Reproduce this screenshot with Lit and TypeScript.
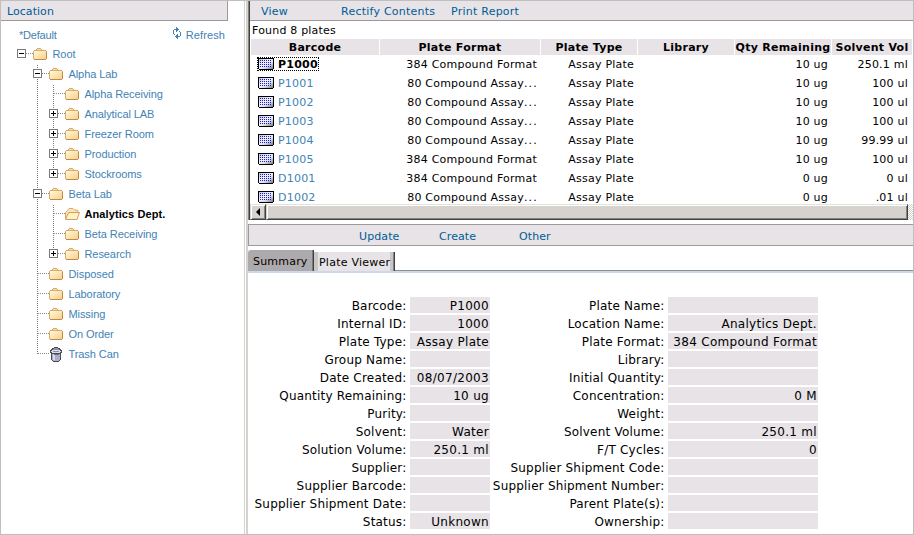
import { LitElement, html, svg, css, nothing } from "lit";
import { customElement, property } from "lit/decorators.js";
import { classMap } from "lit/directives/class-map.js";

interface TreeNode {
  label: string;
  level: number;
  toggle?: "plus" | "minus";
  last?: boolean;
  icon?: "open" | "trash";
  selected?: boolean;
}

const TREE: TreeNode[] = [
  { label: "Root", level: 0, toggle: "minus" },
  { label: "Alpha Lab", level: 1, toggle: "minus" },
  { label: "Alpha Receiving", level: 2 },
  { label: "Analytical LAB", level: 2, toggle: "plus" },
  { label: "Freezer Room", level: 2, toggle: "plus" },
  { label: "Production", level: 2, toggle: "plus" },
  { label: "Stockrooms", level: 2, toggle: "plus", last: true },
  { label: "Beta Lab", level: 1, toggle: "minus" },
  { label: "Analytics Dept.", level: 2, icon: "open", selected: true },
  { label: "Beta Receiving", level: 2 },
  { label: "Research", level: 2, toggle: "plus", last: true },
  { label: "Disposed", level: 1 },
  { label: "Laboratory", level: 1 },
  { label: "Missing", level: 1 },
  { label: "On Order", level: 1 },
  { label: "Trash Can", level: 1, icon: "trash", last: true },
];

const COLUMNS = ["Barcode", "Plate Format", "Plate Type", "Library", "Qty Remaining", "Solvent Vol"];

const PLATES = [
  ["P1000", "384 Compound Format", "Assay Plate", "", "10 ug", "250.1 ml"],
  ["P1001", "80 Compound Assay...", "Assay Plate", "", "10 ug", "100 ul"],
  ["P1002", "80 Compound Assay...", "Assay Plate", "", "10 ug", "100 ul"],
  ["P1003", "80 Compound Assay...", "Assay Plate", "", "10 ug", "100 ul"],
  ["P1004", "80 Compound Assay...", "Assay Plate", "", "10 ug", "99.99 ul"],
  ["P1005", "384 Compound Format", "Assay Plate", "", "10 ug", "100 ul"],
  ["D1001", "384 Compound Format", "Assay Plate", "", "0 ug", "0 ul"],
  ["D1002", "80 Compound Assay...", "Assay Plate", "", "0 ug", ".01 ul"],
];

const SUMMARY = [
  ["Barcode:", "P1000", "Plate Name:", ""],
  ["Internal ID:", "1000", "Location Name:", "Analytics Dept."],
  ["Plate Type:", "Assay Plate", "Plate Format:", "384 Compound Format"],
  ["Group Name:", "", "Library:", ""],
  ["Date Created:", "08/07/2003", "Initial Quantity:", ""],
  ["Quantity Remaining:", "10 ug", "Concentration:", "0 M"],
  ["Purity:", "", "Weight:", ""],
  ["Solvent:", "Water", "Solvent Volume:", "250.1 ml"],
  ["Solution Volume:", "250.1 ml", "F/T Cycles:", "0"],
  ["Supplier:", "", "Supplier Shipment Code:", ""],
  ["Supplier Barcode:", "", "Supplier Shipment Number:", ""],
  ["Supplier Shipment Date:", "", "Parent Plate(s):", ""],
  ["Status:", "Unknown", "Ownership:", ""],
];

const folderIcon = html`<svg width="16" height="20" viewBox="0 0 16 20" shape-rendering="crispEdges">
  <defs><linearGradient id="f" x1="0" y1="0" x2="1" y2="1">
    <stop offset="0" stop-color="#fff8de" /><stop offset="1" stop-color="#f9d183" />
  </linearGradient></defs>
  <path d="M4 4h4v1h1v1h4v1h1v8h-1v1H1v-1H0V7h1V6h2V5h1z" fill="#d9a968" />
  <path d="M4 5h4v1H4z" fill="#f7e2b5" />
  <path d="M1 7h12v8H1z" fill="url(#f)" />
  <path d="M13 8h1v7h-1zM1 15h12v1H1z" fill="#bd8a52" />
</svg>`;

const openFolderIcon = html`<svg width="16" height="20" viewBox="0 0 16 20">
  <path d="M.5 15V8.500L2.500 6.500L4 4.500H8L9.500 6H12.500L13.500 8.500" fill="#fbe5b6" stroke="#d9a968" />
  <path d="M.5 15.500L3.500 8.500H14.500L12 15.500z" fill="#fff0c8" stroke="#d3a05f" />
</svg>`;

const trashIcon = html`<svg width="16" height="20" viewBox="0 0 16 20" shape-rendering="crispEdges">
  <path d="M5 3h4v1h2v1h1v1h1v3h-1v7h-1v1h-1v1H4v-1H3v-1H2V9H1V6h1V5h1V4h2z" fill="#4a4c52" />
  <path d="M3 6h8v1h1v1h-1v1H3V8H2V7h1z" fill="#dcdde8" />
  <path d="M5 4h4v1h1v1H4V5h1zM4 7h6v1H4z" fill="#8d8fa6" />
  <path d="M3 10h8v6h-1v1H4v-1H3z" fill="#adaecb" />
  <path d="M4 10h2v6H4z" fill="#d6d7ea" />
  <path d="M5 10h5v1H5z" fill="#6b6d80" />
</svg>`;

const refreshIcon = html`<svg width="9" height="13" viewBox="0 0 9 13" shape-rendering="crispEdges" fill="#4282b5">
  <path d="M3 0h1v5H3zM4 1h1v3H4zM5 2h1v1H5zM1 2h2v1H1zM0 3h1v4H0zM1 7h1v1H1z" />
  <path d="M6 4h1v1H6zM7 5h1v4H7zM5 9h2v1H5zM4 7h1v5H4zM3 8h1v3H3zM2 9h1v1H2z" />
</svg>`;

const plateIcon = html`<svg width="16" height="12" viewBox="0 0 16 12" shape-rendering="crispEdges">
  <defs>
    <linearGradient id="p" x1="0" y1="0" x2="1" y2="1">
      <stop offset="0" stop-color="#c4c4cc" /><stop offset=".4" stop-color="#f2f2fb" /><stop offset=".65" stop-color="#dedee6" /><stop offset="1" stop-color="#77777c" />
    </linearGradient>
    <pattern id="w" width="2" height="2" patternUnits="userSpaceOnUse"><rect width="1" height="1" fill="#1919d8" /></pattern>
  </defs>
  <path d="M0 0h16v11h-1v1H1v-1H0z" fill="#000" />
  <path d="M1 1h14v10H1z" fill="url(#p)" />
  <path d="M2 2h12v7H2z" fill="url(#w)" />
</svg>`;

@customElement("tree-row")
class TreeRow extends LitElement {
  @property({ attribute: false }) node!: TreeNode;

  static styles = css`
    :host { display: flex; height: 20px; align-items: center; padding-left: 16px; }
    svg { display: block; flex: none; }
    .label { padding-left: 3.5px; color: #4282b5; white-space: nowrap; font: 11px/20px "Liberation Sans", Arial, sans-serif; letter-spacing: -0.08px; }
    .selected { color: #000; font-weight: bold; letter-spacing: 0.1px; }
  `;

  private guide(i: number) {
    const n = this.node;
    const own = i === n.level;
    const line = i > 0 && (own || i === 1);
    const bottom = own && n.last ? 10 : 20;
    return html`<svg width="16" height="20" viewBox="0 0 16 20" shape-rendering="crispEdges">
      ${line ? svg`<path d="M4.500 1V${bottom}" stroke="#7b797b" stroke-dasharray="1 1" />` : nothing}
      ${own ? svg`<path d="M5 9.500H16" stroke="#8c8a8c" stroke-dasharray="1 1" />` : nothing}
      ${own && n.toggle
        ? svg`<path d="M.5 5.500h8v8h-8z" fill="#fff" stroke="#7b797b" />
            <path d="M2 9.500h5${n.toggle === "plus" ? "M4.500 7v5" : ""}" stroke="#000" />`
        : nothing}
    </svg>`;
  }

  render() {
    const n = this.node;
    const icon = n.icon === "open" ? openFolderIcon : n.icon === "trash" ? trashIcon : folderIcon;
    return html`${Array.from({ length: n.level + 1 }, (_, i) => this.guide(i))}${icon}
      <span class=${classMap({ label: true, selected: !!n.selected })}>${n.label}</span>`;
  }
}

@customElement("app-root")
class AppRoot extends LitElement {
  static styles = css`
    :host {
      display: grid; grid-template-columns: 243px 4px 1fr; box-sizing: border-box;
      width: 914px; height: 535px; border: 1px solid #c0bfc0; background: #fff; color: #000;
      overflow: hidden; font: 11px "DejaVu Sans", Verdana, sans-serif;
    }
    .splitter { border-left: 1px solid #d6d3ce; border-right: 2px solid #d6d3ce; box-sizing: border-box; }
    .location {
      box-sizing: border-box; width: 227px; height: 20px; padding-left: 6px; line-height: 21px;
      background: #e7e3e7; border-right: 1px solid #9c9a9c; border-bottom: 1px solid #9c9a9c; color: #005d94;
      letter-spacing: 0.05px;
    }
    .head {
      display: flex; justify-content: space-between; align-items: center; box-sizing: border-box;
      height: 23px; padding: 5px 19px 0 18px; color: #4282b5;
      font: 11px "Liberation Sans", Arial, sans-serif;
    }
    .head span:first-child { letter-spacing: -0.2px; }
    .refresh { display: flex; align-items: center; gap: 4px; letter-spacing: 0.1px; }
    .refresh svg { position: relative; top: -2px; }
    .right { display: flex; flex-direction: column; min-width: 0; }
    .grid-pane {
      display: flex; flex-direction: column; box-sizing: border-box; height: 219px; overflow: hidden;
      border-left: 1px solid #848284; box-shadow: inset 1px 0 #424142; padding-left: 1px;
    }
    .bar {
      display: flex; flex: none; box-sizing: border-box; height: 20px; line-height: 21px; background: #e7e3e7;
      border-bottom: 1px solid #9c9a9c; color: #005d94; letter-spacing: 0.24px; white-space: nowrap;
    }
    .bar.top { padding-left: 11px; }
    .bar.low { height: 22px; line-height: 23px; margin-top: 4px; padding-left: 110px; border: 1px solid #9c9a9c; border-right: 0; letter-spacing: 0.1px; }
    .slot { width: 80px; }
    .slot.wide { width: 110px; }
    .found { flex: none; height: 18px; line-height: 19px; padding-left: 2px; letter-spacing: 0.2px; }
    .cols { display: grid; flex: none; grid-template-columns: 128px 160px 96px 96px 96px 80px; column-gap: 1px; padding-left: 1px; }
    .th { height: 16px; line-height: 17px; background: #e7e3e7; text-align: center; font-weight: bold; white-space: nowrap; letter-spacing: 0.26px; }
    .rows { height: 149px; overflow: hidden; }
    .td { height: 19px; line-height: 19px; text-align: right; padding-right: 3px; white-space: nowrap; letter-spacing: 0.22px; }
    .td:last-child { padding-right: 4px; }
    .dots { letter-spacing: 1.2px; margin-right: -1px; }
    .td.code { box-sizing: border-box; padding: 3px 0 0 7px; color: #4282b5; line-height: 13px; text-align: left; }
    .td svg { display: block; }
    .mark { display: flex; align-items: flex-start; gap: 4px; width: fit-content; height: 12px; }
    .focus { outline: 1px dotted #000; color: #000; font-weight: bold; }
    .scroll { display: flex; flex: none; height: 16px; background: repeating-conic-gradient(#d6d3ce 0 25%, #fff 0 50%) 0 0 / 2px 2px; }
    .btn, .thumb {
      box-sizing: border-box; height: 16px; background: #d6d3ce; border: 1px solid; border-color: #e4e2de #424142 #424142 #d6d3ce;
      box-shadow: inset 1px 1px #fff, inset -1px -1px #848284;
    }
    .btn { width: 16px; }
    .btn svg { display: block; }
    .thumb { width: 642px; }
    .tabs { display: flex; flex: none; align-items: flex-end; height: 25px; white-space: nowrap; }
    .tab { box-sizing: border-box; }
    .tab.active { width: 66px; height: 21px; line-height: 23px; padding-left: 5px; background: #adaaad; border-right: 1px solid #424142; box-shadow: inset -1px 0 #7b797b; border-top-left-radius: 3px; letter-spacing: 0.2px; }
    .tab.other { width: 81px; height: 19px; line-height: 21px; padding-left: 5px; background: linear-gradient(90deg, #c6c7c6 0 4px, #e7e3e7 4px 76px, #c6c7c6 76px); border-right: 1px solid #424142; box-shadow: inset -1px 0 #848284; letter-spacing: 0.24px; }
    .rule { flex: 1; border-bottom: 1px solid #8c8e8c; }
    .blue { flex: none; height: 2px; background: #ced9e7; }
    .form { display: grid; grid-template-columns: 162px 80px 178px 150px; grid-auto-rows: 16px; row-gap: 2px; padding-top: 24px; font-size: 12px; }
    .k, .v { line-height: 18px; text-align: right; white-space: nowrap; }
    .k { padding-right: 3.500px; letter-spacing: 0.2px; }
    .v { background: #e7e3e7; padding-right: 1px; letter-spacing: 0.3px; }
  `;

  private cell(text: string) {
    return text.endsWith("...")
      ? html`<div class="td">${text.slice(0, -3)}<span class="dots">...</span></div>`
      : html`<div class="td">${text}</div>`;
  }

  render() {
    return html`
      <div class="left">
        <div class="location">Location</div>
        <div class="head"><span>*Default</span><span class="refresh">${refreshIcon}Refresh</span></div>
        ${TREE.map((n) => html`<tree-row .node=${n}></tree-row>`)}
      </div>
      <div class="splitter"></div>
      <div class="right">
        <div class="grid-pane">
          <div class="bar top">
            <span class="slot">View</span><span class="slot wide">Rectify Contents</span><span class="slot">Print Report</span>
          </div>
          <div class="found">Found 8 plates</div>
          <div class="cols">${COLUMNS.map((c) => html`<div class="th">${c}</div>`)}</div>
          <div class="rows">
            ${PLATES.map(([code, ...rest], i) => html`<div class="cols">
              <div class="td code"><span class=${classMap({ mark: true, focus: i === 0 })}>${plateIcon}${code}</span></div>
              ${rest.map((t) => this.cell(t))}
            </div>`)}
          </div>
          <div class="scroll">
            <div class="btn"><svg width="14" height="14" viewBox="0 0 14 14"><path d="M5 7l4-4v8z" /></svg></div>
            <div class="thumb"></div>
          </div>
        </div>
        <div class="bar low"><span class="slot">Update</span><span class="slot">Create</span><span class="slot">Other</span></div>
        <div class="tabs"><div class="tab active">Summary</div><div class="tab other">Plate Viewer</div><div class="rule"></div></div>
        <div class="blue"></div>
        <div class="form">
          ${SUMMARY.map(([a, b, c, d]) => html`<div class="k">${a}</div><div class="v">${b}</div><div class="k">${c}</div><div class="v">${d}</div>`)}
        </div>
      </div>
    `;
  }
}
